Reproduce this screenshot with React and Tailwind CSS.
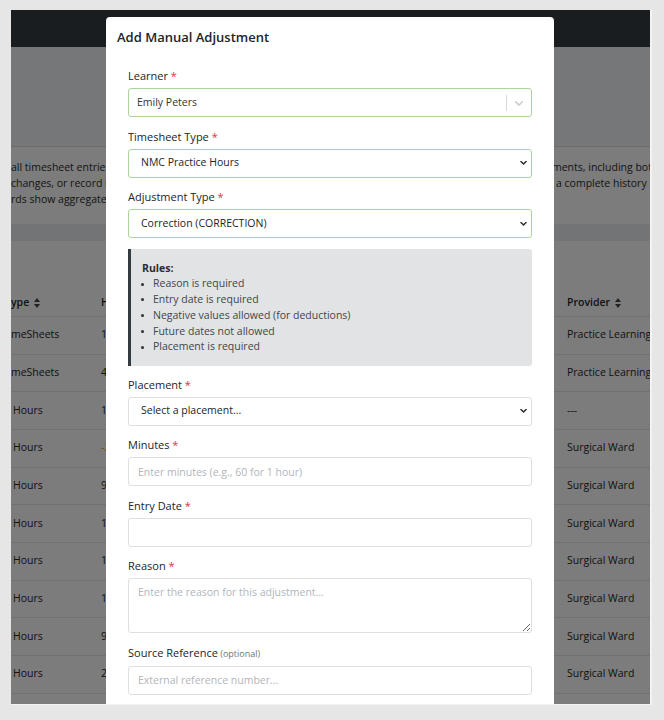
import React from "react";

const rows = [
  { type: "meSheets", hours: "120.00", warn: false, provider: "Practice Learning Partnership" },
  { type: "meSheets", hours: "45.00", warn: false, provider: "Practice Learning Partnership" },
  { type: "Hours", hours: "12.50", warn: false, provider: "---", pad: true },
  { type: "Hours", hours: "-2.00", warn: true, provider: "Surgical Ward", pad: true },
  { type: "Hours", hours: "9.00", warn: false, provider: "Surgical Ward", pad: true },
  { type: "Hours", hours: "12.00", warn: false, provider: "Surgical Ward", pad: true },
  { type: "Hours", hours: "11.50", warn: false, provider: "Surgical Ward", pad: true },
  { type: "Hours", hours: "10.00", warn: false, provider: "Surgical Ward", pad: true },
  { type: "Hours", hours: "9.50", warn: false, provider: "Surgical Ward", pad: true },
  { type: "Hours", hours: "2.00", warn: false, provider: "Surgical Ward", pad: true },
];

function SortIcon() {
  return (
    <svg width="6" height="10" viewBox="0 0 6 10" className="ml-[5px] inline-block">
      <path d="M3 0L6 4H0z" fill="#444" />
      <path d="M3 10L0 6h6z" fill="#444" />
    </svg>
  );
}

function Chevron() {
  return (
    <svg width="7" height="5" viewBox="0 0 7 5" className="pointer-events-none absolute right-[5px] top-1/2 -translate-y-1/2">
      <path d="M1 1l2.5 2.5L6 1" stroke="#2b2f33" strokeWidth="1.5" fill="none" strokeLinecap="round" />
    </svg>
  );
}

function Label({ children, required, optional }) {
  return (
    <label className="block text-[11px] leading-[18px] text-[#212529] mb-[3px]">
      {children}
      {required && <span className="text-[#dc3545]"> *</span>}
      {optional && <span className="text-[9px] text-[#6c757d]"> (optional)</span>}
    </label>
  );
}

function SelectField({ label, value, options, valid }) {
  return (
    <div className="mb-[10.5px]">
      <Label required>{label}</Label>
      <div className="relative">
        <select
          defaultValue={value}
          className={`appearance-none block w-full h-[29px] rounded-[3px] border bg-white pl-[12px] pr-[20px] text-[10.5px] text-[#212529] outline-none ${
            valid ? "border-[#add599]" : "border-[#dcdfe3]"
          }`}
        >
          {options.map((o) => (
            <option key={o}>{o}</option>
          ))}
        </select>
        <Chevron />
      </div>
    </div>
  );
}

function TextField({ label, placeholder, required, optional }) {
  return (
    <div className="mb-[10.5px]">
      <Label required={required} optional={optional}>
        {label}
      </Label>
      <input
        placeholder={placeholder}
        className="block w-full h-[29px] rounded-[3px] border border-[#dcdfe3] bg-white px-[9px] text-[10.5px] text-[#212529] placeholder:text-[#b1b6bb] outline-none"
      />
    </div>
  );
}

export default function App() {
  return (
    <div className="w-[664px] h-[720px] bg-[#e6e6e6] pt-[10px] pl-[11px] font-['Open_Sans',sans-serif]">
      <div className="relative w-[641px] h-[695px] overflow-hidden bg-[#f8f9fa] border-r-2 border-b border-[#f3f3f3]">
        {/* page behind the dialog */}
        <div className="h-[37px] bg-[#343a40]" />
        <div className="h-[100px] bg-[#eceef0] border-b border-[#d6d8da]" />
        <div className="h-[77px] pt-[12px] text-[10.5px] leading-[16px] text-[#2a2a2a] whitespace-nowrap">
          <div className="flex">
            <span className="w-[541px] shrink-0">all timesheet entries and manual adjust</span>
            <span>ments, including both</span>
          </div>
          <div className="flex">
            <span className="w-[545px] shrink-0">changes, or record hours</span>
            <span>a complete history of</span>
          </div>
          <div className="flex">
            <span className="w-[545px] shrink-0">rds show aggregate totals</span>
          </div>
        </div>
        <div className="h-[17px] bg-[#e6e8ea]" />
        <div className="pt-[48px] text-[10.5px] text-[#212529] whitespace-nowrap">
          <div className="flex h-[28px] items-center border-b border-[#dee2e6] font-semibold">
            <div className="w-[90px] flex items-center">
              ype
              <SortIcon />
            </div>
            <div className="w-[466px]">Hours</div>
            <div className="flex-1 flex items-center">
              Provider
              <SortIcon />
            </div>
          </div>
          {rows.map((r, i) => (
            <div key={i} className="flex h-[37.67px] items-center border-b border-[#dee2e6]">
              <div className={`w-[90px] ${r.pad ? "pl-[2px]" : ""}`}>{r.type}</div>
              <div className={`w-[466px] ${r.warn ? "text-[#d9a000]" : ""}`}>{r.hours}</div>
              <div className="flex-1 overflow-hidden">{r.provider}</div>
            </div>
          ))}
        </div>

        {/* backdrop */}
        <div className="absolute inset-0 bg-black/50" />

        {/* dialog */}
        <div className="absolute left-[95px] top-[7px] w-[448px] bg-white rounded-t-[4px]">
          <div className="h-[41px] flex items-center px-[11px]">
            <h5 className="text-[13px] font-semibold text-[#212529]">Add Manual Adjustment</h5>
          </div>
          <div className="px-[22px] pt-[9px] pb-[24px]">
            <div className="mb-[10.5px]">
              <Label required>Learner</Label>
              <div className="flex h-[29px] items-center rounded-[3px] border border-[#add599] bg-white">
                <div className="flex-1 pl-[8px] text-[10.5px] text-[#333]">Emily Peters</div>
                <span className="h-[16px] w-px bg-[#d9d9d9]" />
                <div className="px-[5px] flex items-center">
                  <svg width="14" height="14" viewBox="0 0 20 20" fill="#cccccc">
                    <path d="M4.516 7.548c0.436-0.446 1.043-0.481 1.576 0l3.908 3.747 3.908-3.747c0.533-0.481 1.141-0.446 1.574 0 0.436 0.445 0.408 1.197 0 1.615-0.406 0.418-4.695 4.502-4.695 4.502-0.217 0.223-0.502 0.335-0.787 0.335s-0.57-0.112-0.789-0.335c0 0-4.287-4.084-4.695-4.502s-0.436-1.17 0-1.615z" />
                  </svg>
                </div>
              </div>
            </div>

            <SelectField
              label="Timesheet Type"
              value="NMC Practice Hours"
              options={["NMC Practice Hours", "Simulated Practice Hours", "Theory Hours"]}
              valid
            />
            <SelectField
              label="Adjustment Type"
              value="Correction (CORRECTION)"
              options={["Correction (CORRECTION)", "Manual Entry (MANUAL)", "Deduction (DEDUCTION)"]}
              valid
            />

            <div className="mt-[1px] mb-[10px] rounded-r-[3px] border-l-[3px] border-[#343a40] bg-[#e2e3e5] pl-[11px] pt-[12px] pb-[10.5px] text-[10.5px] leading-[15.75px] text-[#41464b]">
              <div className="font-bold text-[#2b2f33]">Rules:</div>
              <ul>
                {[
                  "Reason is required",
                  "Entry date is required",
                  "Negative values allowed (for deductions)",
                  "Future dates not allowed",
                  "Placement is required",
                ].map((t) => (
                  <li key={t} className="flex items-center">
                    <span className="ml-[-1px] mr-[9px] h-[3px] w-[3px] rounded-full bg-[#2b2f33]" />
                    {t}
                  </li>
                ))}
              </ul>
            </div>

            <SelectField
              label="Placement"
              value="Select a placement..."
              options={["Select a placement...", "Surgical Ward", "Practice Learning Partnership"]}
            />
            <TextField label="Minutes" required placeholder="Enter minutes (e.g., 60 for 1 hour)" />
            <TextField label="Entry Date" required placeholder="" />

            <div className="mb-[10.5px]">
              <Label required>Reason</Label>
              <textarea
                placeholder="Enter the reason for this adjustment..."
                className="block w-full h-[55px] rounded-[3px] border border-[#dcdfe3] bg-white px-[9px] pt-[5px] text-[10.5px] leading-[16px] text-[#212529] placeholder:text-[#b1b6bb] outline-none"
              />
            </div>

            <TextField label="Source Reference" optional placeholder="External reference number..." />
          </div>
        </div>
      </div>
    </div>
  );
}
